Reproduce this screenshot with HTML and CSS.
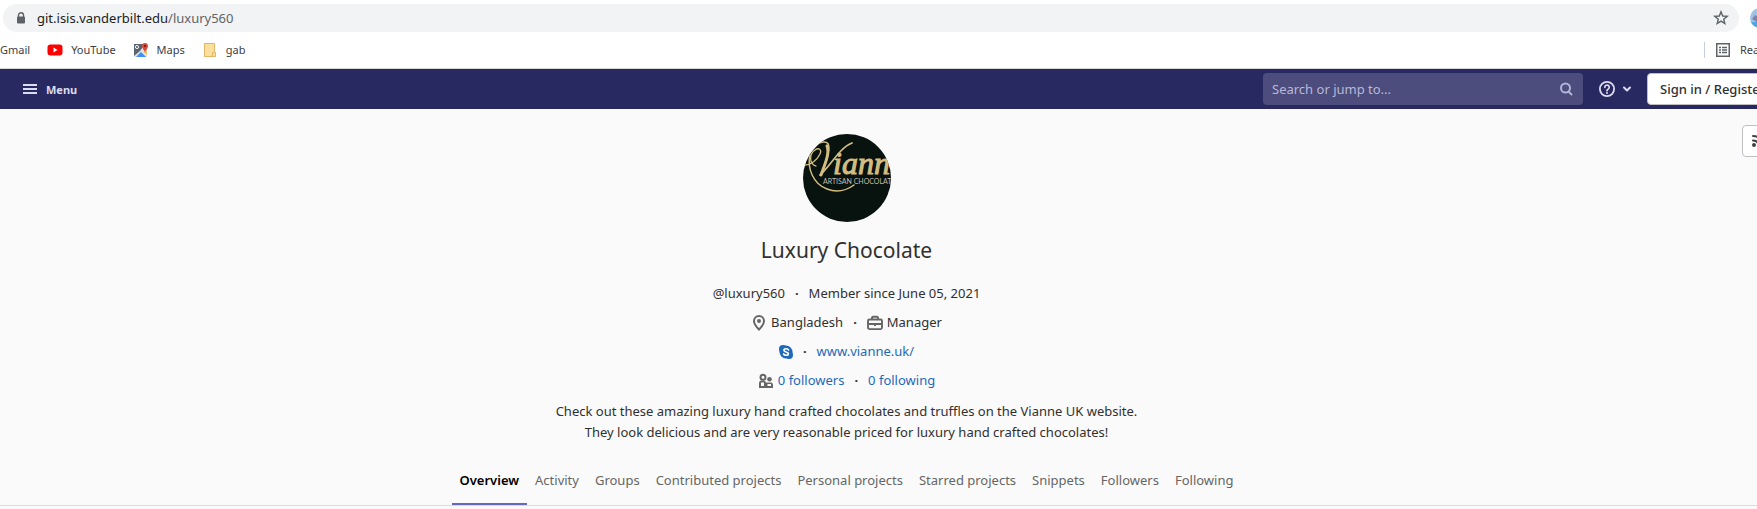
FILE: index.html
```html
<!DOCTYPE html>
<html lang="en">
<head>
  <meta charset="UTF-8" />
  <meta name="viewport" content="width=device-width, initial-scale=1.0" />
  <title>Luxury Chocolate · GitLab</title>
  <link rel="stylesheet" href="styles.css">
</head>
<body>
  <div class="browser">
    <div class="address-row">
      <div class="address-bar">
        <svg class="lock" width="10" height="12" viewBox="0 0 10 12">
          <path d="M2.500 5V3.200a2.500 2.500 0 0 1 5 0V5" fill="none" stroke="#5f6368" stroke-width="1.400"/>
          <rect x="1" y="4.500" width="8" height="7" rx="1" fill="#5f6368"/>
        </svg>
        <span class="url">git.isis.vanderbilt.edu<span class="path">/luxury560</span></span>
        <button class="plain" aria-label="Bookmark this page">
          <svg width="16" height="16" viewBox="0 0 16 16">
            <path d="M8 1.800l1.700 4.200 4.500.3-3.500 2.900 1.100 4.400L8 11.200l-3.800 2.400 1.100-4.400L1.800 6.300l4.500-.3z" fill="none" stroke="#5f6368" stroke-width="1.400"/>
          </svg>
        </button>
      </div>
      <svg class="profile" width="20" height="20" viewBox="0 0 20 20">
        <circle cx="10" cy="10" r="10" fill="#9fc3e4"/>
        <path d="M1 14h18a10 10 0 0 1-18 0z" fill="#4aa8e8"/>
        <path d="M2 11l3-4 3 2 4-4 5 8-9 2z" fill="#8482a8"/>
      </svg>
    </div>
    <div class="bookmarks">
      <a href="#">Gmail</a>
      <a href="#">
        <svg width="16" height="16" viewBox="0 0 16 16">
          <rect x="0.500" y="2.500" width="15" height="11" rx="3" fill="#f00"/>
          <path d="M6.500 5.500v5l4-2.500z" fill="#fff"/>
        </svg>
        YouTube
      </a>
      <a href="#">
        <svg width="16" height="16" viewBox="0 0 16 16">
          <path d="M1 2h13v13H1z" fill="#dfe3e6"/>
          <path d="M1 2h11L7 9l-6 5z" fill="#5b6670"/>
          <path d="M3 15l5-5 5 5z" fill="#3f8ef0"/>
          <path d="M11 10l3 3V8z" fill="#e8c35a"/>
          <circle cx="4" cy="5" r="1.600" fill="none" stroke="#fff" stroke-width="0.900"/>
          <path d="M12 11c0-2.500-3-4-3-7a3 3 0 0 1 6 0c0 3-3 4.500-3 7z" fill="#dd4b3e"/>
          <circle cx="12" cy="4" r="1.200" fill="#7e2018"/>
        </svg>
        Maps
      </a>
      <a href="#">
        <svg width="16" height="16" viewBox="0 0 16 16">
          <path d="M2.500 1.500h10v9h1v4h-11z" fill="#fbdf9d" stroke="#e5b567"/>
          <path d="M10.500 14v-3.500h2" fill="none" stroke="#e5b567"/>
        </svg>
        gab
      </a>
      <a href="#" class="reading">
        <svg width="14" height="14" viewBox="0 0 14 14">
          <rect x="0.750" y="0.750" width="12.500" height="12.500" fill="none" stroke="#5f6368" stroke-width="1.500"/>
          <path d="M3 4.500h2M3 7h2M3 9.500h2M6 4.500h5M6 7h5M6 9.500h5" stroke="#5f6368" stroke-width="1.400"/>
        </svg>
        Reading list
      </a>
    </div>
  </div>

  <header class="navbar">
    <button class="plain menu">
      <svg width="14" height="12" viewBox="0 0 14 12"><path d="M0 2h14M0 6h14M0 10h14" stroke="#dcdcf0" stroke-width="2"/></svg>
      Menu
    </button>
    <div class="nav-right">
      <form class="search">
        <input type="text" placeholder="Search or jump to..." aria-label="Search or jump to">
        <svg width="16" height="16" viewBox="0 0 16 16" fill="none" stroke="#b3b3d6" stroke-width="2">
          <circle cx="7.500" cy="7" r="4.500"/><path d="M10.500 10.500l3 3" stroke-linecap="round"/>
        </svg>
      </form>
      <button class="plain help" aria-label="Help">
        <svg width="16" height="16" viewBox="0 0 16 16" fill="none" stroke="#dcdcf0">
          <circle cx="8" cy="8" r="7.100" stroke-width="1.800"/>
          <path d="M5.800 6.300a2.200 2.200 0 1 1 3.400 1.800C8.300 8.700 8 9 8 9.700" stroke-width="1.700" stroke-linecap="round"/>
          <circle cx="8" cy="11.900" r="1" fill="#dcdcf0" stroke="none"/>
        </svg>
        <svg width="8" height="8" viewBox="0 0 8 8"><path d="M1 2.500l3 3 3-3" fill="none" stroke="#dcdcf0" stroke-width="2" stroke-linecap="round" stroke-linejoin="round"/></svg>
      </button>
      <a href="#" class="btn sign-in">Sign in / Register</a>
    </div>
  </header>

  <main class="profile-page">
    <a href="#" class="btn rss" aria-label="Subscribe">
      <svg width="16" height="16" viewBox="0 0 16 16" fill="none" stroke="#403f44" stroke-width="2" stroke-linecap="round">
        <path d="M3 3c6 0 10 4 10 10M3 7.500c3.500 0 5.500 2 5.500 5.500"/>
        <circle cx="4" cy="12" r="1" fill="#403f44"/>
      </svg>
    </a>

    <div class="user">
      <svg class="avatar" width="88" height="88" viewBox="0 0 88 88">
        <defs><clipPath id="round"><circle cx="44" cy="44" r="44"/></clipPath></defs>
        <g clip-path="url(#round)">
          <rect width="88" height="88" fill="#08120f"/>
          <g fill="none" stroke="#d3bd7f" stroke-linecap="round">
            <path d="M2 31c6 0 12-5 15-11 2-4-1-7-5-4C6 20 6 30 13 32" stroke-width="1.300"/>
            <path d="M1 30C5 24 8 10 20 8c10-1 6 12-2 33" stroke-width="1.500"/>
            <path d="M24 12c3 7-2 18-6 29" stroke-width="3"/>
            <path d="M17 41C27 33 36 14 49 9" stroke-width="1.700"/>
            <path d="M7 21C4 34 10 50 24 55c10 4 20 1 27-4" stroke-width="1.500"/>
          </g>
          <text class="logo-name" x="30" y="40">iann</text>
          <text class="logo-sub" x="20" y="50">ARTISAN CHOCOLATES</text>
        </g>
      </svg>
      <h1>Luxury Chocolate</h1>

      <div class="info"><span>@luxury560</span><i>·</i><span>Member since June 05, 2021</span></div>
      <div class="info">
        <svg width="16" height="16" viewBox="0 0 16 16">
          <path d="M8 14.500C5 11.500 3 8.800 3 6a5 5 0 0 1 10 0c0 2.800-2 5.500-5 8.500z" fill="none" stroke="#666" stroke-width="2"/>
          <circle cx="8" cy="6" r="2" fill="#666"/>
        </svg>
        <span>Bangladesh</span><i>·</i>
        <svg width="16" height="16" viewBox="0 0 16 16" fill="none" stroke="#666" stroke-width="1.900">
          <rect x="1" y="4.500" width="14" height="9.600" rx="1.500"/>
          <path d="M5 4V2.800q0-1 1-1h4q1 0 1 1V4M1 9h14M8 9v2"/>
        </svg>
        <span>Manager</span>
      </div>
      <div class="info">
        <a href="#" aria-label="Skype">
          <svg width="14" height="14" viewBox="0 0 14 14">
            <circle cx="7" cy="7" r="6.500" fill="#1f69b9"/><circle cx="4" cy="4" r="4" fill="#1f69b9"/><circle cx="10" cy="10" r="4" fill="#1f69b9"/>
            <path d="M9.500 4.900C8.800 3.300 4.900 3.300 4.900 5.200c0 2.100 4.500 1.300 4.500 3.500 0 2-4.200 2-4.900.2" fill="none" stroke="#fff" stroke-width="1.600" stroke-linecap="round"/>
          </svg>
        </a>
        <i>·</i><a href="#">www.vianne.uk/</a>
      </div>
      <div class="info">
        <svg width="16" height="16" viewBox="0 0 16 16" fill="#666">
          <path d="M1 15V10q0-2 2-2.500h3q2 .5 2 2.500v5z"/>
          <path d="M3 13V9.500h3V13z" fill="#fafafa"/>
          <circle cx="5" cy="4.200" r="2.500" fill="none" stroke="#666" stroke-width="2"/>
          <circle cx="11.500" cy="6.300" r="2.300"/>
          <path d="M8 15V9.500h5.500q1.500.5 1.500 2.500v3z"/>
          <path d="M9.500 11h3.500v2H9.500z" fill="#fafafa"/>
        </svg>
        <a href="#">0 followers</a><i>·</i><a href="#">0 following</a>
      </div>
      <p class="bio">Check out these amazing luxury hand crafted chocolates and truffles on the Vianne UK website.<br>They look delicious and are very reasonable priced for luxury hand crafted chocolates!</p>
    </div>

    <nav class="tabs">
      <a href="#" class="active">Overview</a>
      <a href="#">Activity</a>
      <a href="#">Groups</a>
      <a href="#">Contributed projects</a>
      <a href="#">Personal projects</a>
      <a href="#">Starred projects</a>
      <a href="#">Snippets</a>
      <a href="#">Followers</a>
      <a href="#">Following</a>
    </nav>
  </main>
</body>
</html>
```
FILE: styles.css
```css
* {
  box-sizing: border-box;
}
body {
  margin: 0;
  background: #fafafa;
  color: #303030;
  font-family: "Segoe UI", "Noto Sans", "Open Sans", sans-serif;
  font-size: 13px;
  line-height: 21px;
  overflow-x: hidden;
}
a {
  color: #1f69b9;
  text-decoration: none;
}
svg {
  display: block;
  flex: none;
}
.plain {
  display: flex;
  align-items: center;
  padding: 0;
  border: none;
  background: none;
  font: inherit;
  color: inherit;
}
.browser {
  background: #fff;
  border-bottom: 1px solid #d5d5d8;
  overflow: hidden;
}
.address-row {
  display: flex;
  align-items: center;
  gap: 11px;
  margin-right: -13px;
  padding: 4px 0 0 3px;
}
.address-bar {
  flex: 1;
  display: flex;
  align-items: center;
  height: 28px;
  padding: 0 10px 0 13px;
  background: #f1f3f4;
  border-radius: 14px;
}
.url {
  flex: 1;
  margin-left: 11px;
  color: #202124;
}
.path {
  color: #5f6368;
}
.bookmarks {
  display: flex;
  align-items: center;
  gap: 17px;
  height: 36px;
  padding-bottom: 1px;
  font-size: 11px;
}
.bookmarks a {
  display: flex;
  align-items: center;
  gap: 8px;
  color: #3c4043;
  white-space: nowrap;
}
.bookmarks .reading {
  gap: 10px;
  margin-left: auto;
  margin-right: -48px;
  width: 101px;
  height: 16px;
  padding-left: 11px;
  border-left: 1px solid #c4cede;
}
.navbar {
  display: flex;
  align-items: center;
  justify-content: space-between;
  height: 40px;
  padding-left: 23px;
  background: #292961;
  overflow: hidden;
}
.menu {
  gap: 9px;
  font-size: 11px;
  font-weight: 700;
  color: #dcdcf0;
}
.nav-right {
  display: flex;
  align-items: center;
  margin-right: -32px;
}
.search {
  display: flex;
  align-items: center;
  width: 320px;
  height: 32px;
  padding: 0 9px;
  background: #4c4c7d;
  border-radius: 4px;
}
.search input {
  flex: 1;
  min-width: 0;
  padding: 0;
  border: none;
  outline: none;
  background: none;
  font: inherit;
  color: #fff;
}
.search input::placeholder {
  color: #b8b8d8;
  opacity: 1;
}
.help {
  gap: 8px;
  margin: 0 16px;
}
.btn {
  display: flex;
  align-items: center;
  height: 32px;
  padding: 0 12px;
  background: #fff;
  border: 1px solid #bfbfc3;
  border-radius: 4px;
  color: #303030;
  white-space: nowrap;
}
.sign-in {
  width: 142px;
  font-weight: 500;
}
.profile-page {
  position: relative;
  overflow: hidden;
}
.rss {
  position: absolute;
  top: 16px;
  right: -27px;
  width: 42px;
  padding: 0 7px;
}
.user {
  display: flex;
  flex-direction: column;
  align-items: center;
  padding: 25px 64px 0 0;
}
h1 {
  margin: 13px 0 18px;
  font-size: 21px;
  font-weight: 400;
  line-height: 30px;
}
.info {
  display: flex;
  align-items: center;
  gap: 4px;
  height: 21px;
  margin-bottom: 8px;
}
.info i {
  margin: 0 6px;
  font-style: normal;
  font-weight: 700;
}
.bio {
  margin: 2px 0 0;
  text-align: center;
}
.tabs {
  display: flex;
  justify-content: center;
  margin-top: 12px;
  padding-right: 64px;
  border-bottom: 1px solid #dbdbdb;
}
.tabs a {
  padding: 15px 8px 12px;
  border-bottom: 2px solid transparent;
  color: #666;
  white-space: nowrap;
}
.tabs .active {
  border-color: #6666c4;
  color: #000;
  font-weight: 600;
}
.logo-name {
  font: italic 32px "Liberation Serif", serif;
  fill: #d3bd7f;
  stroke: #d3bd7f;
}
.logo-sub {
  font: 7px Lato, sans-serif;
  fill: #c8bba9;
}
```
